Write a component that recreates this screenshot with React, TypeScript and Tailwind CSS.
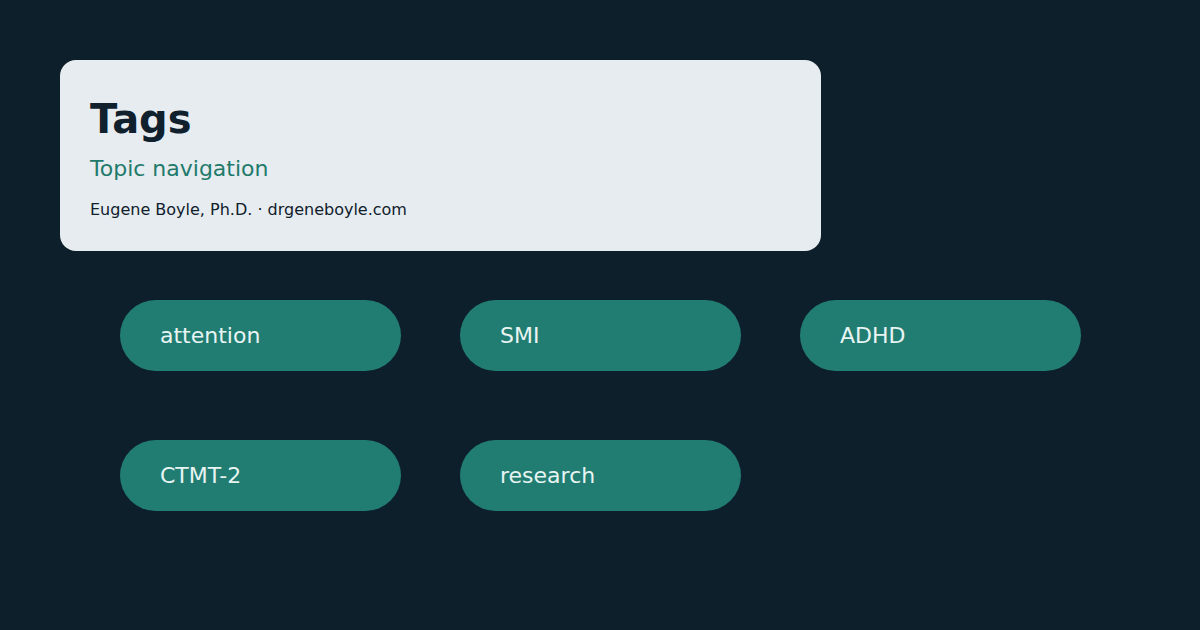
import React from "react";

// Tag index card: header panel and a grid of topic pills
const tags = ["attention", "SMI", "ADHD", "CTMT-2", "research"];

export default function App() {
  return (
    <div
      className="w-[1200px] h-[630px] bg-[#0e1f2c] p-[60px] overflow-hidden"
      style={{ fontFamily: '"DejaVu Sans", "Liberation Sans", sans-serif' }}
    >
      {/* Header */}
      <div className="w-[761px] h-[191px] rounded-[16px] bg-[#e6ecef] px-[30px] pt-[39px]">
        <h1 className="text-[40px] leading-none font-bold text-[#10202d]">Tags</h1>
        <p className="mt-[19px] text-[22px] leading-none text-[#1f7a6c]">Topic navigation</p>
        <p className="mt-[22px] text-[16px] leading-none text-[#10202d]">
          Eugene Boyle, Ph.D. · drgeneboyle.com
        </p>
      </div>

      {/* Topic pills */}
      <div className="mt-[49px] ml-[60px] grid grid-cols-[repeat(3,281px)] gap-x-[59px] gap-y-[69px]">
        {tags.map((tag) => (
          <div
            key={tag}
            className="h-[71px] rounded-full bg-[#217d72] flex items-center pl-[40px]"
          >
            <span className="text-[22px] leading-none text-[#e8f4f2]">{tag}</span>
          </div>
        ))}
      </div>
    </div>
  );
}
